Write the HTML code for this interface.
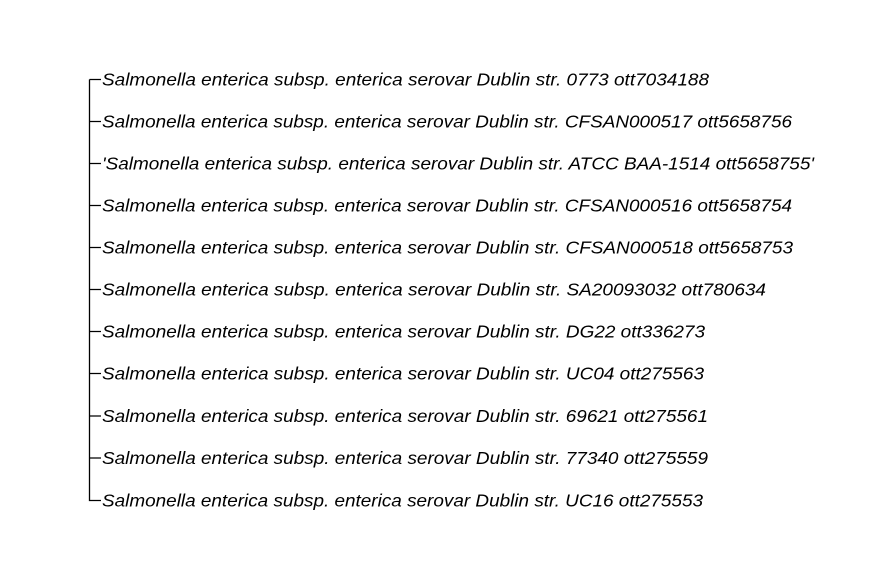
<!DOCTYPE html>
<html><head><style>html,body{margin:0;padding:0;background:#fff}</style></head><body>
<svg width="882" height="569" xmlns="http://www.w3.org/2000/svg" style="display:block">
<g stroke="#000" stroke-width="1.3" fill="none">
<path d="M89.5 79.5V500.5H101"/>
<path d="M89.5 79.5H101M89.5 121.5H101M89.5 163.5H101M89.5 205.5H101M89.5 247.5H101M89.5 289.5H101M89.5 331.5H101M89.5 373.5H101M89.5 416H101M89.5 458H101"/>
</g>
<g font-family="Liberation Sans, sans-serif" font-style="italic" font-size="17.5" fill="#000" lengthAdjust="spacingAndGlyphs">
<text x="102" y="85.5" textLength="607" lengthAdjust="spacingAndGlyphs">Salmonella enterica subsp. enterica serovar Dublin str. 0773 ott7034188</text>
<text x="102" y="127.5" textLength="690" lengthAdjust="spacingAndGlyphs">Salmonella enterica subsp. enterica serovar Dublin str. CFSAN000517 ott5658756</text>
<text x="102" y="169.5" textLength="712" lengthAdjust="spacingAndGlyphs">'Salmonella enterica subsp. enterica serovar Dublin str. ATCC BAA-1514 ott5658755'</text>
<text x="102" y="211.5" textLength="690" lengthAdjust="spacingAndGlyphs">Salmonella enterica subsp. enterica serovar Dublin str. CFSAN000516 ott5658754</text>
<text x="102" y="253.5" textLength="691" lengthAdjust="spacingAndGlyphs">Salmonella enterica subsp. enterica serovar Dublin str. CFSAN000518 ott5658753</text>
<text x="102" y="295.5" textLength="664" lengthAdjust="spacingAndGlyphs">Salmonella enterica subsp. enterica serovar Dublin str. SA20093032 ott780634</text>
<text x="102" y="337.5" textLength="603" lengthAdjust="spacingAndGlyphs">Salmonella enterica subsp. enterica serovar Dublin str. DG22 ott336273</text>
<text x="102" y="379.5" textLength="602" lengthAdjust="spacingAndGlyphs">Salmonella enterica subsp. enterica serovar Dublin str. UC04 ott275563</text>
<text x="102" y="422" textLength="606" lengthAdjust="spacingAndGlyphs">Salmonella enterica subsp. enterica serovar Dublin str. 69621 ott275561</text>
<text x="102" y="464" textLength="606" lengthAdjust="spacingAndGlyphs">Salmonella enterica subsp. enterica serovar Dublin str. 77340 ott275559</text>
<text x="102" y="506.5" textLength="601" lengthAdjust="spacingAndGlyphs">Salmonella enterica subsp. enterica serovar Dublin str. UC16 ott275553</text>
</g>
</svg>
</body></html>
